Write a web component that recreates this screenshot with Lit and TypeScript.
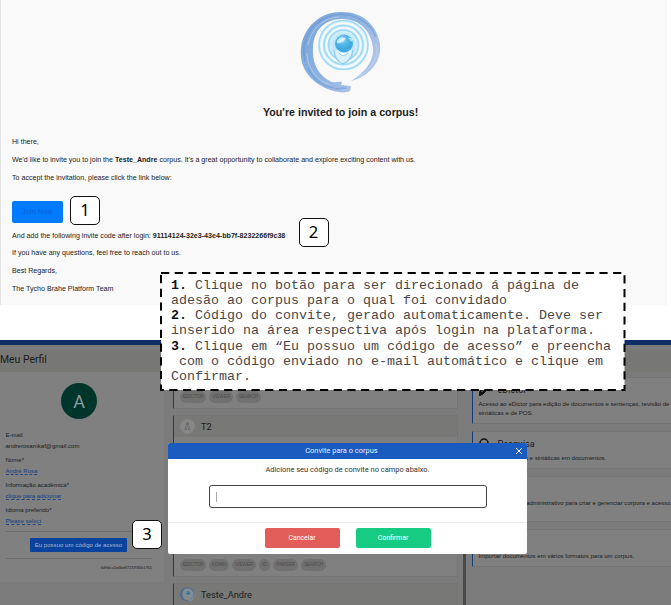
import { LitElement, html, css, svg } from "lit";
import { customElement, property } from "lit/decorators.js";

@customElement("corpus-logo")
class CorpusLogo extends LitElement {
  static styles = css`
    :host { display: block; }
    svg { display: block; width: 100%; height: 100%; }
  `;
  render() {
    return html`<svg viewBox="0 0 82 82">
      <defs>
        <linearGradient id="ring" x1="0" y1="0.2" x2="1" y2="0.8">
          <stop offset="0" stop-color="#7ba6da" />
          <stop offset="0.5" stop-color="#8fb4e2" />
          <stop offset="1" stop-color="#bccbe9" />
        </linearGradient>
        <radialGradient id="halo">
          <stop offset="0" stop-color="#8fd4f4" />
          <stop offset="0.5" stop-color="#cdebf9" />
          <stop offset="1" stop-color="#e2f3fb" />
        </radialGradient>
        <radialGradient id="ball" cx="0.4" cy="0.3">
          <stop offset="0" stop-color="#c8ebfb" />
          <stop offset="0.45" stop-color="#5fbdea" />
          <stop offset="1" stop-color="#3fa9e0" />
        </radialGradient>
      </defs>
      <path fill="url(#ring)" d="M50 80C44 83 34 81 25 77C9 69 -1 56 1 37C3 17 20 1 40 1C61 0 77 13 80 33C82 50 70 65 51 70C64 62 74 51 73 37C71 19 59 8 42 8C24 8 13 20 13 38C12 52 19 65 30 70C35 73 38 70 42 71L41 74L51 75Z" />
      <path fill="none" stroke="#6594ce" stroke-width="1.6" opacity=".5" d="M5 50C0 29 12 8 34 4C52 1 69 9 76 26M8 57C13 68 22 75 34 77M46 77L35 78" />
      <path fill="none" stroke="#c8d9f1" stroke-width="1" opacity=".6" d="M8 34C11 18 23 7 39 6M76 33C80 47 70 60 58 66M7 42C7 58 18 70 30 74" />
      <circle cx="43.500" cy="34" r="25" fill="url(#halo)" />
      ${[24.5, 19.5, 15].map((r) => svg`<circle cx="43.500" cy="34" r=${r} fill="none" stroke="#8fd3f1" stroke-width="1.600" opacity=".8"/>`)}
      ${[22, 17].map((r) => svg`<circle cx="43.500" cy="34" r=${r} fill="none" stroke="#fff" stroke-width="1.400" opacity=".8"/>`)}
      <path d="M34 39Q35 50 43 53Q52 49 53 39" fill="#d9f0fa" stroke="#86c9e9" stroke-width="1.2" />
      <path d="M39 42Q43 47 48 42" fill="#fff" stroke="#8fc9e5" />
      <circle cx="44" cy="32.500" r="9" fill="url(#ball)" />
      <path d="M37 30Q40 25 46 27Q42 33 37 32Z" fill="#e2f6ff" opacity=".8" />
      <path d="M48 26L53 28L51 31Z" fill="#e5f7ff" opacity=".7" />
    </svg>`;
  }
}

@customElement("step-badge")
class StepBadge extends LitElement {
  @property() label = "";
  static styles = css`
    :host {
      display: flex; align-items: center; justify-content: center;
      box-sizing: border-box; width: 30px; height: 29px;
      background: #fff; border: 1.4px solid #111; border-radius: 5px;
      font: 16.5px/1 "Noto Sans", sans-serif; color: #000;
    }
  `;
  render() { return html`<span>${this.label}</span>`; }
}

@customElement("invite-mail")
class InviteMail extends LitElement {
  static styles = css`
    :host {
      display: flex; flex-direction: column; box-sizing: border-box;
      width: 667px; height: 305px; background: #f9f9f9;
      border-left: 1px solid #e4e4e4; padding-left: 11px;
      font: 7.1px/18px "Liberation Sans", Arial, sans-serif; color: #222;
      white-space: nowrap;
    }
    .logo { width: 82px; height: 82px; margin: 11px 0 0 288px; }
    h1 { font-size: 10.68px; line-height: 14px; margin: 12px 0 0 251px; color: #222; }
    .body { padding-top: 14px; }
    p { margin: 0; height: 17.8px; }
    .join {
      display: flex; align-items: center; justify-content: center;
      width: 51px; height: 22px; margin: 14.6px 0 3.6px; border-radius: 2px;
      background: #007bff; color: #0b5ed0; letter-spacing: .2px;
    }
  `;
  render() {
    return html`
      <corpus-logo class="logo"></corpus-logo>
      <h1>You're invited to join a corpus!</h1>
      <div class="body">
        <p>Hi there,</p>
        <p>We'd like to invite you to join the <b>Teste_Andre</b> corpus. It's a great opportunity to collaborate and explore exciting content with us.</p>
        <p>To accept the invitation, please click the link below:</p>
        <div class="join">Join Now</div>
        <p>And add the following invite code after login: <b>91114124-32e3-43e4-bb7f-8232266f9c38</b></p>
        <p>If you have any questions, feel free to reach out to us.</p>
        <p>Best Regards,</p>
        <p>The Tycho Brahe Platform Team</p>
      </div>`;
  }
}

@customElement("profile-page")
class ProfilePage extends LitElement {
  static styles = css`
    :host {
      display: flex; flex-direction: column; height: 265px; overflow: hidden;
      background: #7b7b7b; color: #1c1c1c; white-space: nowrap;
      font: 6.05px/9px "Liberation Sans", Arial, sans-serif;
    }
    .bar { flex: none; height: 5px; background: #0e2f66; }
    .title { flex: none; margin-top: 5px; height: 22px; background: #777775; font: 10.4px/19px Roboto, sans-serif; }
    .cols { display: flex; }
    .panel { width: 164px; height: 210px; box-sizing: border-box; background: #808080; padding: 11px 12px 0 5.5px; flex: none; }
    .face {
      width: 36px; height: 36px; border-radius: 50%; margin-left: 55.5px; background: #00352b;
      color: #8a9a96; font: 18px/37px Roboto, sans-serif; text-align: center;
    }
    dl { margin: 12px 0 0; }
    dt { height: 11px; }
    dd { margin: 0 0 3px; height: 11px; }
    .edit { color: #153f7f; border-bottom: 1px dashed #234a85; }
    .cta { margin-top: 2px; border: solid #6d6d6d; border-width: 1px 0; padding: 6px 0; }
    .cta span { display: block; width: 97px; height: 14px; margin-left: 24.5px; border-radius: 1px; background: #0a429c; color: #a5b7d6; line-height: 14px; text-align: center; }
    .hash { text-align: right; font-size: 3.95px; margin-top: 4px; }
    .mid { width: 285px; margin-left: 9px; flex: none; display: flex; flex-direction: column; gap: 6px; }
    .card { box-sizing: border-box; border: 1px solid #757575; border-left: 1px solid #123c7c; border-radius: 1px; background: #808080; }
    .c1 { height: 37px; padding: 18px 0 0 6px; }
    .c2 { height: 162px; display: flex; flex-direction: column; justify-content: space-between; }
    .c2 .tags { padding: 0 0 5px 6px; }
    .c3 { height: 60px; }
    .head { display: flex; align-items: center; gap: 6px; height: 21px; padding-left: 6px; background: #787876; font: 9.2px/14px Roboto, sans-serif; }
    .icon { width: 15px; height: 15px; border-radius: 50%; background: #868686; }
    .icon svg, .icon corpus-logo { width: 15px; height: 15px; display: block; }
    .icon.dim { background: #848a90; }
    .dim corpus-logo { filter: brightness(.6); }
    .tags { display: flex; gap: 3px; }
    .tags span { height: 12px; line-height: 12px; border-radius: 6px; background: #717171; color: #4c4c4c; font-size: 4.6px; text-align: center; }
    .scroll { width: 3px; height: 140px; margin: 100px 0 0 5px; background: #494949; flex: none; }
    .right { margin-left: 6px; width: 220px; flex: none; display: flex; flex-direction: column; gap: 7px; padding-top: 5px; }
    .tool { padding-left: 5.5px; }
    .tool h2 { display: flex; gap: 8px; align-items: center; height: 20px; margin: 1.5px 0 0; font: 9.1px/14px Roboto, sans-serif; }
    .tool svg { width: 11px; height: 12px; }
    .tool p { margin: 0; }
  `;
  tags(list: [string, number][]) {
    return html`<div class="tags">${list.map(([t, w]) => html`<span style="width:${w}px">${t}</span>`)}</div>`;
  }
  tool(h: number, icon: unknown, name: string, text: unknown) {
    return html`<div class="card tool" style="height:${h}px"><h2><svg viewBox="0 0 11 12">${icon}</svg>${name}</h2><p>${text}</p></div>`;
  }
  render() {
    return html`
      <div class="bar"></div>
      <div class="title">Meu Perfil</div>
      <div class="cols">
        <div class="panel">
          <div class="face">A</div>
          <dl>
            <dt>E-mail</dt><dd>andrerosamkaf@gmail.com</dd>
            <dt>Nome*</dt><dd><span class="edit">André Rosa</span></dd>
            <dt>Informação acadêmica*</dt><dd><span class="edit">clique para adicionar</span></dd>
            <dt>Idioma preferido*</dt><dd><span class="edit">Please select</span></dd>
          </dl>
          <div class="cta"><span>Eu possuo um código de acesso</span></div>
          <div class="hash">6d9dca1e6be87237f35b1765</div>
        </div>
        <div class="mid">
          <div class="card c1">${this.tags([["EDICTOR", 26], ["VIEWER", 24], ["SEARCH", 25]])}</div>
          <div class="card c2">
            <div class="head">
              <div class="icon"><svg viewBox="0 0 15 15"><circle cx="7.500" cy="5" r="1.500" fill="#666"/><path d="M5 7.500h5v1H5zM4.500 9.500h2.500v1.500H4.500zM8 9.500h2.500v1.500H8z" fill="#686868"/></svg></div>T2
            </div>
            ${this.tags([["EDICTOR", 26], ["ADMIN", 20], ["VIEWER", 24], ["IO", 11], ["PARSER", 25], ["SEARCH", 25]])}
          </div>
          <div class="card c3"><div class="head"><div class="icon dim"><corpus-logo></corpus-logo></div>Teste_Andre</div></div>
        </div>
        <div class="scroll"></div>
        <div class="right">
          ${this.tool(47, svg`<path d="M0 12L1 7L7 1L10 4L4 10ZM8 0L11 3" fill="#111" stroke="#111"/><path d="M2.500 8L7 3.500" stroke="#808080"/>`, "eDictor", html`Acesso ao eDictor para edição de documentos e sentenças, revisão de a<br />sintáticas e de POS.`)}
          ${this.tool(38, svg`<circle cx="5" cy="5" r="4" fill="none" stroke="#111" stroke-width="1.500"/><path d="M8 8l3 3" stroke="#111" stroke-width="1.500"/>`, "Pesquisa", "Pesquisas lexicais e sintáticas em documentos.")}
          ${this.tool(46, svg`<circle cx="5" cy="5" r="4"/>`, "Admin", "Acesso ao painel administrativo para criar e gerenciar corpora e acesso")}
          ${this.tool(38, svg`<path d="M5 1v9M1 6l4 4 4-4" stroke="#111" fill="none"/>`, "IO", "Importar documentos em vários formatos para um corpus.")}
        </div>
      </div>`;
  }
}

@customElement("invite-dialog")
class InviteDialog extends LitElement {
  static styles = css`
    :host {
      display: flex; flex-direction: column; width: 359px; height: 111px; overflow: hidden;
      background: #fff; border-radius: 2px; color: #333;
      font: 7.47px/10px Roboto, "Liberation Sans", sans-serif; text-align: center; white-space: nowrap;
    }
    .top { display: grid; grid-template-columns: 16px 1fr 16px; align-items: center; height: 16px; background: #1a5bbf; color: #e3ecfa; }
    .top span { grid-column: 2; padding-right: 12px; }
    .top svg { width: 8px; height: 8px; justify-self: center; }
    .hint { margin-top: 5.5px; }
    .field { box-sizing: border-box; width: 278px; height: 23px; margin: 10.5px 0 0 41px; border: 1px solid #444; border-radius: 3px; padding: 6px 0 0 6px; }
    .caret { width: 1px; height: 10px; background: #aaa; }
    .foot { margin-top: 14px; border-top: 1px solid #e9e9e9; padding-top: 5px; display: flex; justify-content: center; gap: 16px; }
    .btn { width: 75px; height: 20px; line-height: 20px; border-radius: 2px; color: #fff; background: #e35d5b; font-size: 6.9px; }
    .ok { background: #17cc82; }
  `;
  render() {
    return html`
      <div class="top"><span>Convite para o corpus</span><svg viewBox="0 0 8 8"><path d="M1 1l6 6M7 1l-6 6" stroke="#fff" stroke-width="1"/></svg></div>
      <div class="hint">Adicione seu código de convite no campo abaixo.</div>
      <div class="field"><div class="caret"></div></div>
      <div class="foot"><div class="btn">Cancelar</div><div class="btn ok">Confirmar</div></div>`;
  }
}

@customElement("app-root")
class AppRoot extends LitElement {
  static styles = css`
    :host { display: block; position: relative; width: 671px; height: 605px; overflow: hidden; background: #fff; }
    profile-page { margin-top: 35px; }
    .note, step-badge, invite-dialog { position: absolute; }
    .b1 { left: 70px; top: 196px; }
    .b2 { left: 298.5px; top: 218px; }
    .b3 { left: 132px; top: 520px; }
    invite-dialog { left: 168px; top: 443px; }
    .note {
      left: 160px; top: 271px; width: 466px; height: 120px; box-sizing: border-box; padding: 7px 0 0 11px;
      font: 13.33px/15.15px "Liberation Mono", monospace; color: #484848;
    }
    .frame { position: absolute; left: 0; top: 0; width: 466px; height: 120px; }
    .text { position: relative; white-space: pre; }
    b { color: #111; }
  `;
  render() {
    return html`
      <invite-mail></invite-mail>
      <profile-page></profile-page>
      <invite-dialog></invite-dialog>
      <div class="note">
        <svg class="frame" viewBox="0 0 466 120"><rect x="1" y="2" width="463.500" height="117" fill="#fff" stroke="#000" stroke-width="2" stroke-dasharray="8.200 5.500"/></svg>
        <div class="text"><b>1.</b> Clique no botão para ser direcionado á página de
adesão ao corpus para o qual foi convidado
<b>2.</b> Código do convite, gerado automaticamente. Deve ser
inserido na área respectiva após login na plataforma.
<b>3.</b> Clique em “Eu possuo um código de acesso” e preencha
 com o código enviado no e-mail automático e clique em
Confirmar.</div></div>
      <step-badge class="b1" label="1"></step-badge>
      <step-badge class="b2" label="2"></step-badge>
      <step-badge class="b3" label="3"></step-badge>`;
  }
}
